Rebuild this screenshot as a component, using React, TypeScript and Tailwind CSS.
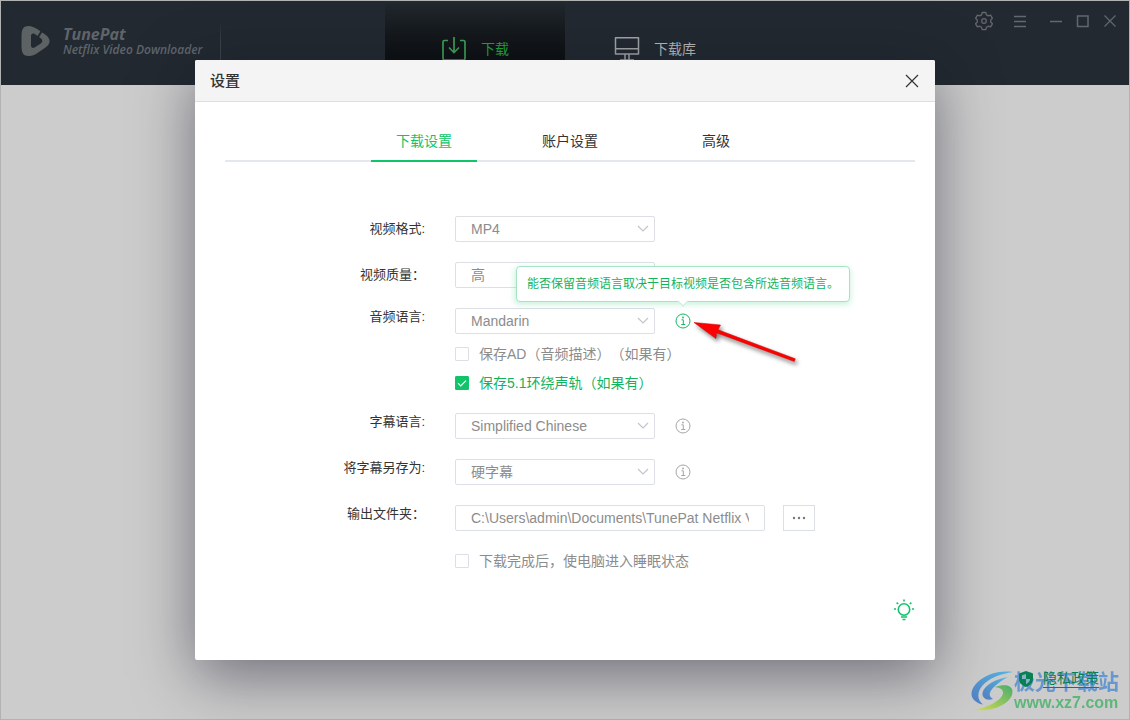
import { useState } from "react";
import type { ReactNode } from "react";

function Logo() {
  return (
    <svg viewBox="0 0 30 32" className="h-8 w-[30px]" aria-hidden="true">
      <path
        fill="#5d6264"
        fillRule="evenodd"
        d="M.5 11C.5 4 2.500 1 7.500 1c3 0 6 1.500 9 3.300l8 5.500c5.500 4 5.500 9 0 12.700l-8 5.500c-3 2-6 3.300-9 3C2.500 31 .5 28 .5 21zM10 11v9.500c0 2 1.500 3 3.500 2l6.300-4c2-1.500 2-3.500.2-5l-6.500-4.700c-2-1-3.500.2-3.500 2.200z"
      />
      <path d="M17 12l3.800-6" stroke="#222930" strokeWidth="2" />
    </svg>
  );
}

function InfoIcon() {
  return (
    <svg viewBox="0 0 16 16" className="size-4" fill="none" stroke="currentColor" aria-hidden="true">
      <circle cx="8" cy="8" r="7" />
      <path d="M6.500 6.800h1.800v4.400M6.300 11.500h4" />
      <circle cx="8" cy="4.500" r=".9" fill="currentColor" stroke="none" />
    </svg>
  );
}

function InfoButton({ label, active = false, children }: { label: string; active?: boolean; children?: ReactNode }) {
  return (
    <div className="relative ml-0.5 flex">
      <button type="button" aria-label={label} className={active ? "text-[#12b95f]" : "text-[#a6a6a6]"}>
        <InfoIcon />
      </button>
      {children}
    </div>
  );
}

function Row({ label, id, top = false, children }: { label: string; id: string; top?: boolean; children: ReactNode }) {
  return (
    <div className={top ? "flex items-start gap-[30px]" : "flex items-center gap-[30px]"}>
      <label htmlFor={id} className="w-[200px] text-right text-[13px] leading-[18px] text-[#333333]">
        {label}
      </label>
      <div className="flex items-center gap-[18px]">{children}</div>
    </div>
  );
}

function Select({ id, options }: { id: string; options: string[] }) {
  return (
    <div className="relative w-[200px]">
      <select
        id={id}
        className="block h-[26px] w-full appearance-none rounded-xs border border-[#dcdfe6] bg-white pr-7 pl-[15px] text-sm leading-6 text-[#8c8c8c] outline-none"
      >
        {options.map((o) => (
          <option key={o}>{o}</option>
        ))}
      </select>
      <svg viewBox="0 0 12 8" className="pointer-events-none absolute top-[9px] right-1.5 h-2 w-3 text-[#c0c4cc]" fill="none" stroke="currentColor" strokeWidth="1.2" aria-hidden="true">
        <path d="M1 1l5 5 5-5" />
      </svg>
    </div>
  );
}

function CheckRow({ label, initial = false }: { label: string; initial?: boolean }) {
  const [on, setOn] = useState(initial);
  return (
    <label className={on ? "flex items-center gap-2.5 text-sm leading-5 text-[#12b35e]" : "flex items-center gap-2.5 text-sm leading-5 text-[#8c8c8c]"}>
      <span className="relative flex">
        <input
          type="checkbox"
          checked={on}
          onChange={(e) => setOn(e.target.checked)}
          className="size-3.5 appearance-none rounded-[1px] border border-[#dcdfe6] bg-white checked:border-[#10c469] checked:bg-[#10c469]"
        />
        {on && (
          <svg viewBox="0 0 14 14" className="pointer-events-none absolute inset-0 size-3.5" fill="none" stroke="white" strokeWidth="1.2" aria-hidden="true">
            <path d="M3 7.200l2.700 2.700L11 4.600" />
          </svg>
        )}
      </span>
      {label}
    </label>
  );
}

function Header() {
  return (
    <header className="flex h-[84px] justify-between bg-[#222930]">
      <div className="flex flex-1 basis-0 items-start">
        <div className="flex items-center gap-3 pt-6 pl-5">
          <Logo />
          <div className="font-['Open_Sans',sans-serif] text-[#5f646b] italic">
            <p className="text-base leading-[18px] font-bold">TunePat</p>
            <p className="text-xs leading-[14px] font-semibold whitespace-nowrap">Netflix Video Downloader</p>
          </div>
        </div>
        <div className="mt-5 ml-[18px] h-11 w-px bg-linear-to-b from-transparent via-[#3b4248] to-[#3b4248]" />
      </div>
      <nav className="flex">
        <a href="#download" className="flex w-[180px] items-start justify-center gap-3.5 bg-linear-to-b from-[#222930] via-[#14181b] via-40% to-[#050607] pt-[35px] text-sm leading-[26px] text-[#1fa83a]">
          <svg viewBox="0 0 26 26" className="size-[26px]" fill="none" stroke="#40a055" strokeWidth="1.700" aria-hidden="true">
            <path d="M7 4.500H3.500Q2 4.500 2 6v16.500Q2 24 3.500 24h19q1.500 0 1.500-1.500V6q0-1.500-1.500-1.500H19M13 1v15.500M8 11.500l5 5 5-5" />
          </svg>
          下载
        </a>
        <a href="#library" className="flex w-[180px] items-start justify-center gap-3.5 pt-[35px] text-sm leading-[26px] text-[#b8b8b8]">
          <svg viewBox="0 0 26 26" className="size-[26px]" fill="none" stroke="#a2a5a8" strokeWidth="1.500" aria-hidden="true">
            <path strokeLinejoin="round" d="M1.500 1.700h23v16.200h-23zM1.500 12.700h23M11 18v6M15 18v6M6 23.900h14" />
          </svg>
          下载库
        </a>
      </nav>
      <div className="flex flex-1 basis-0 justify-end">
        <div className="mr-3 flex items-start gap-[13px] pt-2.5 text-[#62686c]">
          <button type="button" aria-label="设置" className="mr-[3px]">
            <svg viewBox="0 0 20 20" className="size-5" fill="none" stroke="currentColor" strokeWidth="1.300" aria-hidden="true">
              <path strokeLinejoin="round" d="M8.200 1.500h3.600l.7 2.400 1.700 1 2.400-.7 1.800 3.100-1.700 1.800v1.900l1.700 1.800-1.800 3.100-2.400-.7-1.700 1-.7 2.400H8.200l-.7-2.400-1.700-1-2.400.7-1.800-3.100L3.300 11V9.100L1.600 7.300l1.800-3.100 2.400.7 1.700-1z" />
              <circle cx="10" cy="10" r="2.300" />
            </svg>
          </button>
          <button type="button" aria-label="菜单" className="mr-1.5">
            <svg viewBox="0 0 20 20" className="size-5" stroke="currentColor" strokeWidth="1.500" aria-hidden="true">
              <path d="M4 5.500h12M4 10.500h12M4 15.500h12" />
            </svg>
          </button>
          <button type="button" aria-label="最小化">
            <svg viewBox="0 0 14 20" className="h-5 w-3.5" stroke="currentColor" strokeWidth="1.500" aria-hidden="true">
              <path d="M1 10.500h12" />
            </svg>
          </button>
          <button type="button" aria-label="最大化">
            <svg viewBox="0 0 14 20" className="h-5 w-3.5" fill="none" stroke="currentColor" strokeWidth="1.500" aria-hidden="true">
              <path d="M1.500 5h10.500v10.500H1.500z" />
            </svg>
          </button>
          <button type="button" aria-label="关闭">
            <svg viewBox="0 0 14 20" className="h-5 w-3.5" stroke="currentColor" strokeWidth="1.200" aria-hidden="true">
              <path d="M1.500 4.500l11 11M12.500 4.500l-11 11" />
            </svg>
          </button>
        </div>
      </div>
    </header>
  );
}

function Arrow() {
  return (
    <svg viewBox="0 0 112 52" className="pointer-events-none absolute top-0 left-4 h-[52px] w-28 max-w-none drop-shadow-[2px_3px_2px_rgba(0,0,0,0.5)]" aria-hidden="true">
      <path d="M3 9.500L29.500 12l-2.500 4.800 77.300 29-1 2.700L25.500 19.800l-.5 5.700z" fill="#fe0000" stroke="#c80000" strokeWidth=".5" />
    </svg>
  );
}

const tabs = ["下载设置", "账户设置", "高级"];

function SettingsDialog() {
  const [tab, setTab] = useState(0);
  return (
    <section role="dialog" aria-label="设置" className="flex min-h-[600px] w-[740px] max-w-full flex-col rounded-xs bg-white shadow-[0_16px_60px_rgba(20,22,40,0.5)]">
      <div className="flex items-center justify-between rounded-t-xs border-b border-[#dedede] bg-[#f4f4f4] px-[15px] py-2.5">
        <h1 className="text-[15px] leading-[21px] font-medium text-[#333333]">设置</h1>
        <button type="button" aria-label="关闭" className="text-[#333333]">
          <svg viewBox="0 0 16 16" className="size-4" stroke="currentColor" strokeWidth="1.200" aria-hidden="true">
            <path d="M2 2l12 12M14 2L2 14" />
          </svg>
        </button>
      </div>
      <div className="flex flex-1 flex-col pt-5 pr-5 pl-[30px]">
        <div role="tablist" className="flex justify-center gap-10 border-b-2 border-[#e4e7ed]">
          {tabs.map((t, i) => (
            <button
              key={t}
              type="button"
              role="tab"
              aria-selected={i === tab}
              onClick={() => setTab(i)}
              className={
                i === tab
                  ? "-mb-0.5 h-10 w-[106px] border-b-2 border-[#10c469] text-sm text-[#10c469]"
                  : "-mb-0.5 h-10 w-[106px] border-b-2 border-transparent text-sm text-[#333333]"
              }
            >
              {t}
            </button>
          ))}
        </div>
        <form className="mt-[54px] flex flex-col gap-5">
          <Row label="视频格式:" id="format">
            <Select id="format" options={["MP4", "MKV"]} />
          </Row>
          <Row label="视频质量：" id="quality">
            <Select id="quality" options={["高", "中", "低"]} />
          </Row>
          <div className="flex flex-col gap-2.5">
            <Row label="音频语言:" id="audio" top>
              <Select id="audio" options={["Mandarin", "English"]} />
              <InfoButton label="音频语言说明" active>
                <div role="tooltip" className="absolute bottom-[27px] left-1/2 z-10 -translate-x-1/2 rounded-sm border border-[#a5e3c3] bg-white px-2.5 py-2 text-xs leading-[18px] whitespace-nowrap text-[#12b35e] shadow-[0_2px_6px_rgba(16,196,105,0.25)]">
                  能否保留音频语言取决于目标视频是否包含所选音频语言。
                  <span className="absolute -bottom-1 left-1/2 size-2 -translate-x-1/2 rotate-45 border-r border-b border-[#c5ecd8] bg-white" />
                </div>
                <Arrow />
              </InfoButton>
            </Row>
            <div className="flex flex-col gap-[9px] pl-[230px]">
              <CheckRow label="保存AD（音频描述）（如果有）" />
              <CheckRow label="保存5.1环绕声轨（如果有）" initial />
            </div>
          </div>
          <Row label="字幕语言:" id="subtitle" top>
            <Select id="subtitle" options={["Simplified Chinese", "English"]} />
            <InfoButton label="字幕语言说明" />
          </Row>
          <Row label="将字幕另存为:" id="save-as" top>
            <Select id="save-as" options={["硬字幕", "软字幕"]} />
            <InfoButton label="字幕保存说明" />
          </Row>
          <Row label="输出文件夹：" id="folder" top>
            <input
              id="folder"
              type="text"
              defaultValue="C:\Users\admin\Documents\TunePat Netflix Video Downloader"
              className="h-[26px] w-[310px] rounded-xs border border-[#dcdfe6] bg-white px-[15px] text-sm text-[#8c8c8c] outline-none"
            />
            <button type="button" aria-label="选择文件夹" className="flex h-[26px] w-8 items-center justify-center border border-[#dcdfe6] text-[#777777]">
              <svg viewBox="0 0 14 4" className="h-1 w-3.5" fill="currentColor" aria-hidden="true">
                <circle cx="2" cy="2" r="1.200" />
                <circle cx="7" cy="2" r="1.200" />
                <circle cx="12" cy="2" r="1.200" />
              </svg>
            </button>
          </Row>
          <div className="pl-[230px]">
            <CheckRow label="下载完成后，使电脑进入睡眠状态" />
          </div>
        </form>
        <button type="button" aria-label="提示" className="mt-7 self-end text-[#10c469]">
          <svg viewBox="0 0 22 22" className="size-[22px]" fill="none" stroke="currentColor" strokeWidth="1.600" aria-hidden="true">
            <circle cx="11" cy="10.500" r="5.700" />
            <path d="M8 18h6M9.500 20.500h3M11 .5v2M1 10h2M19 10h2M3.600 3.600l1.600 1.400M18.400 3.600l-1.600 1.400" />
          </svg>
        </button>
      </div>
    </section>
  );
}

function Watermark() {
  return (
    <div className="pointer-events-none absolute right-2.5 bottom-1.5 z-20 flex items-center opacity-85">
      <svg viewBox="0 0 44 42" className="h-[42px] w-11" aria-hidden="true">
        <defs>
          <linearGradient id="wm-blue" x1="1" y1="0" x2="0" y2="1">
            <stop offset="0" stopColor="#3fb2e6" />
            <stop offset="1" stopColor="#3e6fbf" />
          </linearGradient>
          <linearGradient id="wm-green" x1="1" y1="0" x2="0" y2="1">
            <stop offset="0" stopColor="#35a85c" />
            <stop offset="1" stopColor="#d6df3a" />
          </linearGradient>
        </defs>
        <path fill="url(#wm-blue)" d="M43 1C30-1 14 3 5 14c-7 9-3 17 8 19.500C6 28 7 19 15 12 22 6 31 3 43 1z" />
        <path fill="url(#wm-blue)" d="M38 6C26 8 14 14 12.500 22c-.5 5 4 8 10.500 6-5-3-4-7 1-12 4-4 8-7 14-10z" />
        <path fill="url(#wm-green)" d="M25 16c9-3 17-2 17.500 4C43 31 26 41 4 39c12-2 28-9 29-17 0-4-3-5-8-6z" />
      </svg>
      <div className="whitespace-nowrap">
        <p className="text-[21px] leading-[22px] font-bold text-[#5590d0]">极光下载站</p>
        <p className="font-['Liberation_Sans',Arial,sans-serif] text-base leading-5 font-bold text-[#4bb36c]">www.xz7.com</p>
      </div>
    </div>
  );
}

export default function App() {
  return (
    <div className="relative flex min-h-screen flex-col border border-[#b1b3b2] bg-[#cccccc] font-['Liberation_Sans','Noto_Sans_CJK_SC',sans-serif] [text-spacing-trim:space-all]">
      <Header />
      <footer className="relative z-30 mt-auto flex justify-end pr-[30px] pb-[31px]">
        <a href="#privacy" className="flex items-center gap-2.5 text-sm text-[#087f55]">
          <svg viewBox="0 0 14 16" className="h-4 w-3.5" aria-hidden="true">
            <path fill="currentColor" d="M7 0l7 2.500V8c0 4-3 6.500-7 8-4-1.500-7-4-7-8V2.500z" />
            <path fill="#86b3c4" d="M7 3v5H3V4.200zM7 8h4c0 2.500-1.800 4-4 5z" />
          </svg>
          <span className="border-b border-[#087f55] leading-[18px]">隐私政策</span>
        </a>
      </footer>
      <Watermark />
      <div className="absolute inset-0 z-10 flex items-start justify-center pt-[59px]">
        <SettingsDialog />
      </div>
    </div>
  );
}
